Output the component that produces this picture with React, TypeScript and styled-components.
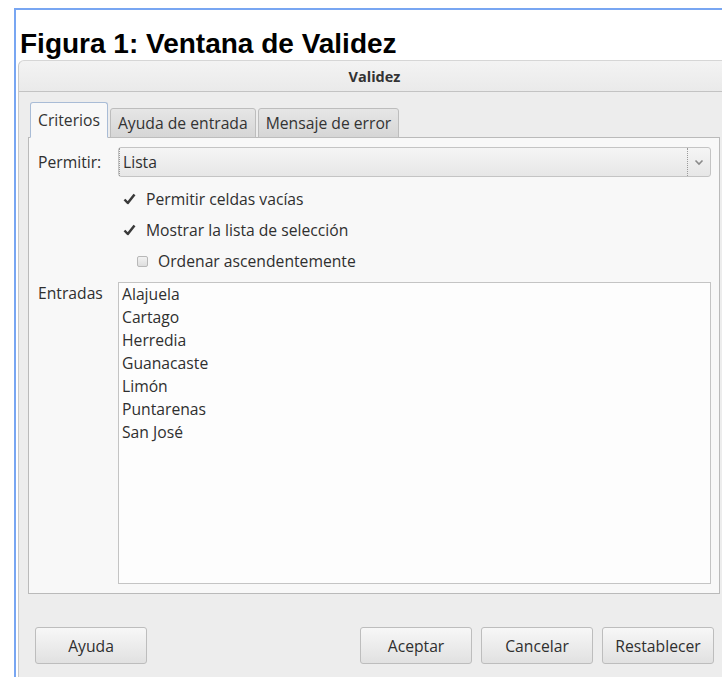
import React, { useState } from 'react';
import styled, { createGlobalStyle } from 'styled-components';

const GlobalStyle = createGlobalStyle`
  html, body {
    margin: 0;
    padding: 0;
    background: #ffffff;
    overflow: hidden;
  }
  body {
    width: 722px;
    height: 677px;
  }
`;

const uiFont = `"Open Sans", "Noto Sans", "DejaVu Sans", sans-serif`;

const Frame = styled.div`
  margin: 8px 0 0 14px;
  height: 669px;
  border-top: 2px solid #78a6f2;
  border-left: 2px solid #78a6f2;
  box-sizing: border-box;
  overflow: hidden;
`;

const Caption = styled.h1`
  margin: 18px 0 0 4px;
  font-family: "Liberation Sans", Arial, sans-serif;
  font-weight: bold;
  font-size: 28px;
  line-height: 31px;
  color: #000;
  position: relative;
  z-index: 1;
`;

const Dialog = styled.div`
  margin: 1px 0 0 2px;
  width: 712px;
  height: 640px;
  background: #ededed;
  border-left: 1px solid #c9c9c9;
  border-top: 1px solid #d6d6d6;
  border-top-left-radius: 6px;
  box-sizing: border-box;
  font-family: ${uiFont};
  color: #2f2f2f;
`;

const TitleBar = styled.div`
  height: 31px;
  display: flex;
  align-items: center;
  justify-content: center;
  background: linear-gradient(#f3f3f3, #eaeaea);
  border-bottom: 1px solid #c3c3c3;
  border-top-left-radius: 6px;
  font-size: 14.5px;
  font-weight: bold;
  color: #333;
  box-sizing: border-box;
`;

const Body = styled.div`
  padding: 10px 10px 0 9px;
`;

const TabStrip = styled.div`
  display: flex;
  align-items: flex-end;
  gap: 2px;
  padding-left: 2px;
  height: 35px;
`;

const Tab = styled.button<{ $active?: boolean }>`
  font-family: ${uiFont};
  font-size: 15.7px;
  color: #333;
  padding: 0 7px;
  margin-bottom: -1px;
  height: ${(p) => (p.$active ? '36px' : '30px')};
  border: 1px solid ${(p) => (p.$active ? '#a9bcd6' : '#bdbdbd')};
  border-bottom: ${(p) => (p.$active ? '1px solid #f8f8f8' : '1px solid #bdbdbd')};
  border-radius: 3px 3px 0 0;
  background: ${(p) => (p.$active ? '#f8f8f8' : 'linear-gradient(#e6e6e6, #d6d6d6)')};
  position: relative;
  z-index: ${(p) => (p.$active ? 1 : 0)};
  cursor: pointer;
  outline: none;
`;

const Panel = styled.div`
  height: 457px;
  box-sizing: border-box;
  border: 1px solid #bababa;
  background: #f8f8f8;
  padding: 9px 8px 9px 9px;
  display: grid;
  grid-template-columns: 80px 1fr;
  grid-template-rows: 30px 6px 31px 31px 32px 5px 1fr;
  font-size: 15.7px;
`;

const Label = styled.div`
  color: #2f2f2f;
  display: flex;
  align-items: center;
  height: 30px;
`;

const EntriesLabel = styled(Label)`
  grid-row: 7;
  height: 22px;
`;

const Combo = styled.div`
  grid-column: 2;
  display: flex;
  align-items: stretch;
  border: 1px solid #c4c4c4;
  border-radius: 3px;
  background: linear-gradient(#f5f5f5, #e7e7e7);
  box-sizing: border-box;
`;

const ComboValue = styled.div`
  flex: 1;
  display: flex;
  align-items: center;
  padding-left: 3px;
  border-left: 1px dotted #9a9a9a;
  color: #2f2f2f;
`;

const ComboArrow = styled.div`
  width: 22px;
  display: flex;
  align-items: center;
  justify-content: center;
  border-left: 1px dotted #9a9a9a;
`;

const CheckRow = styled.label<{ $indent?: number; $row: number }>`
  grid-column: 2;
  grid-row: ${(p) => p.$row};
  display: flex;
  align-items: center;
  gap: 10px;
  padding-left: ${(p) => p.$indent ?? 5}px;
  color: #2f2f2f;
  cursor: pointer;
`;

const Box = styled.span`
  width: 11px;
  height: 11px;
  border: 1px solid #b8b8b8;
  border-radius: 2px;
  background: linear-gradient(#f2f2f2, #dedede);
  box-sizing: border-box;
`;

const Entries = styled.div`
  grid-column: 2;
  grid-row: 7;
  border: 1px solid #c4c4c4;
  background: #fdfdfd;
  padding: 0 3px;
  line-height: 23px;
  color: #2f2f2f;
`;

const ButtonBar = styled.div`
  display: flex;
  align-items: center;
  padding: 33px 6px 0 7px;
  gap: 9px;
`;

const Spacer = styled.div`
  flex: 1;
`;

const Button = styled.button`
  width: 112px;
  height: 37px;
  font-family: ${uiFont};
  font-size: 15.7px;
  color: #2f2f2f;
  border: 1px solid #bdbdbd;
  border-radius: 3px;
  background: linear-gradient(#f7f7f7, #e1e1e1);
  cursor: pointer;
`;

const Tick = () => (
  <svg width="13" height="12" viewBox="0 0 13 12">
    <path d="M1.5 6.5 L4.8 10 L11.5 1.5" fill="none" stroke="#3a3a3a" strokeWidth="2.5" strokeLinejoin="round" />
  </svg>
);

const Chevron = () => (
  <svg width="10" height="7" viewBox="0 0 10 7">
    <path d="M1.5 1.5 L5 5 L8.5 1.5" fill="none" stroke="#8a8a8a" strokeWidth="1.6" />
  </svg>
);

const provinces = ['Alajuela', 'Cartago', 'Herredia', 'Guanacaste', 'Limón', 'Puntarenas', 'San José'];

const App: React.FC = () => {
  const [tab, setTab] = useState(0);
  const tabs = ['Criterios', 'Ayuda de entrada', 'Mensaje de error'];

  return (
    <>
      <GlobalStyle />
      <Frame>
        <Caption>Figura 1: Ventana de Validez</Caption>
        <Dialog>
          <TitleBar>Validez</TitleBar>
          <Body>
            <TabStrip>
              {tabs.map((t, i) => (
                <Tab key={t} type="button" $active={i === tab} onClick={() => setTab(i)}>
                  {t}
                </Tab>
              ))}
            </TabStrip>
            <Panel>
              <Label>Permitir:</Label>
              <Combo>
                <ComboValue>Lista</ComboValue>
                <ComboArrow>
                  <Chevron />
                </ComboArrow>
              </Combo>
              <CheckRow $row={3}>
                <Tick />
                Permitir celdas vacías
              </CheckRow>
              <CheckRow $row={4}>
                <Tick />
                Mostrar la lista de selección
              </CheckRow>
              <CheckRow $row={5} $indent={19}>
                <Box />
                Ordenar ascendentemente
              </CheckRow>
              <EntriesLabel>Entradas</EntriesLabel>
              <Entries>
                {provinces.map((p) => (
                  <div key={p}>{p}</div>
                ))}
              </Entries>
            </Panel>
            <ButtonBar>
              <Button type="button">Ayuda</Button>
              <Spacer />
              <Button type="button">Aceptar</Button>
              <Button type="button">Cancelar</Button>
              <Button type="button">Restablecer</Button>
            </ButtonBar>
          </Body>
        </Dialog>
      </Frame>
    </>
  );
};

export default App;
